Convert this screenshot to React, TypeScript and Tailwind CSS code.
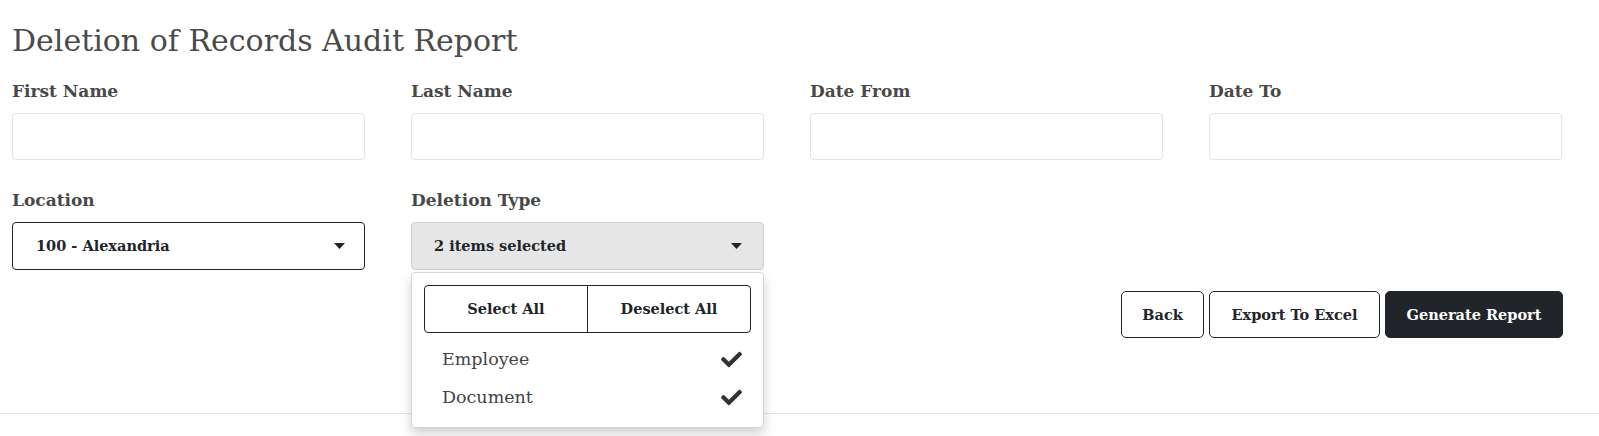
import React from "react";
import { FaCheck } from "react-icons/fa";

const serif = "font-['DejaVu_Serif','Liberation_Serif',serif]";

const Caret: React.FC = () => (
  <svg width="11" height="6" viewBox="0 0 11 6" className="shrink-0">
    <polygon points="0,0 11,0 5.5,6" fill="#212529" />
  </svg>
);

const TextField: React.FC<{ label: string }> = ({ label }) => (
  <div className="flex flex-col">
    <label className="text-[17px] font-bold leading-5 text-[#484848]">{label}</label>
    <input
      type="text"
      className="mt-[12px] h-[47px] w-full rounded-[4px] border border-[#e2e2e2] bg-white px-3 outline-none"
    />
  </div>
);

const DeletionTypeSelect: React.FC = () => {
  const items = ["Employee", "Document"];
  return (
    <div className="relative flex flex-col">
      <label className="text-[17px] font-bold leading-5 text-[#484848]">Deletion Type</label>
      <button className="mt-[12px] flex h-[48px] w-full items-center justify-between rounded-[4px] border border-[#cfcfcf] bg-[#e6e6e6] pl-[22px] pr-[21px] text-[14.5px] font-bold text-[#212529]">
        <span>2 items selected</span>
        <Caret />
      </button>
      <div className="absolute left-0 right-0 top-[82px] z-10 rounded-[4px] border border-[#d6d6d6] bg-white pb-[11px] pt-[12px] shadow-[0_6px_12px_rgba(0,0,0,0.18)]">
        <div className="mx-[12px] flex h-[48px] rounded-[4px] border border-[#212529]">
          <button className="flex-1 border-r border-[#212529] text-[14.5px] font-bold text-[#212529]">
            Select All
          </button>
          <button className="flex-1 text-[14.5px] font-bold text-[#212529]">Deselect All</button>
        </div>
        <ul className="mt-[7px]">
          {items.map((item) => (
            <li
              key={item}
              className="flex h-[38px] items-center justify-between pl-[30px] pr-[21px] text-[17.5px] text-[#444]"
            >
              <span>{item}</span>
              <FaCheck className="text-[21px] text-[#333]" />
            </li>
          ))}
        </ul>
      </div>
    </div>
  );
};

export default function App() {
  return (
    <div className={`min-h-[436px] w-full bg-white ${serif}`}>
      <div className="px-3 pt-[22px]">
        <h1 className="text-[30px] leading-[38px] font-normal text-[#4a4a4a]">
          Deletion of Records Audit Report
        </h1>
        <div className="mt-[21px] grid grid-cols-[353px_353px_353px_353px] gap-x-[46px] gap-y-[30px]">
          <TextField label="First Name" />
          <TextField label="Last Name" />
          <TextField label="Date From" />
          <TextField label="Date To" />
          <div className="flex flex-col">
            <label className="text-[17px] font-bold leading-5 text-[#484848]">Location</label>
            <button className="mt-[12px] flex h-[48px] w-full items-center justify-between rounded-[4px] border border-[#212529] bg-white pl-[23px] pr-[19px] text-[14.5px] font-bold text-[#212529]">
              <span>100 - Alexandria</span>
              <Caret />
            </button>
          </div>
          <DeletionTypeSelect />
        </div>
        <div className="mt-[21px] flex justify-end gap-[5px] pr-[24px]">
          <button className="h-[47px] w-[83px] rounded-[5px] border border-[#212529] bg-white text-[14.5px] font-bold text-[#212529]">
            Back
          </button>
          <button className="h-[47px] w-[171px] rounded-[5px] border border-[#212529] bg-white text-[14.5px] font-bold text-[#212529]">
            Export To Excel
          </button>
          <button className="h-[47px] w-[178px] rounded-[5px] border border-[#212529] bg-[#212529] text-[14.5px] font-bold text-white">
            Generate Report
          </button>
        </div>
      </div>
      <div className="mt-[75px] border-t border-[#e5e5e5]" />
    </div>
  );
}
